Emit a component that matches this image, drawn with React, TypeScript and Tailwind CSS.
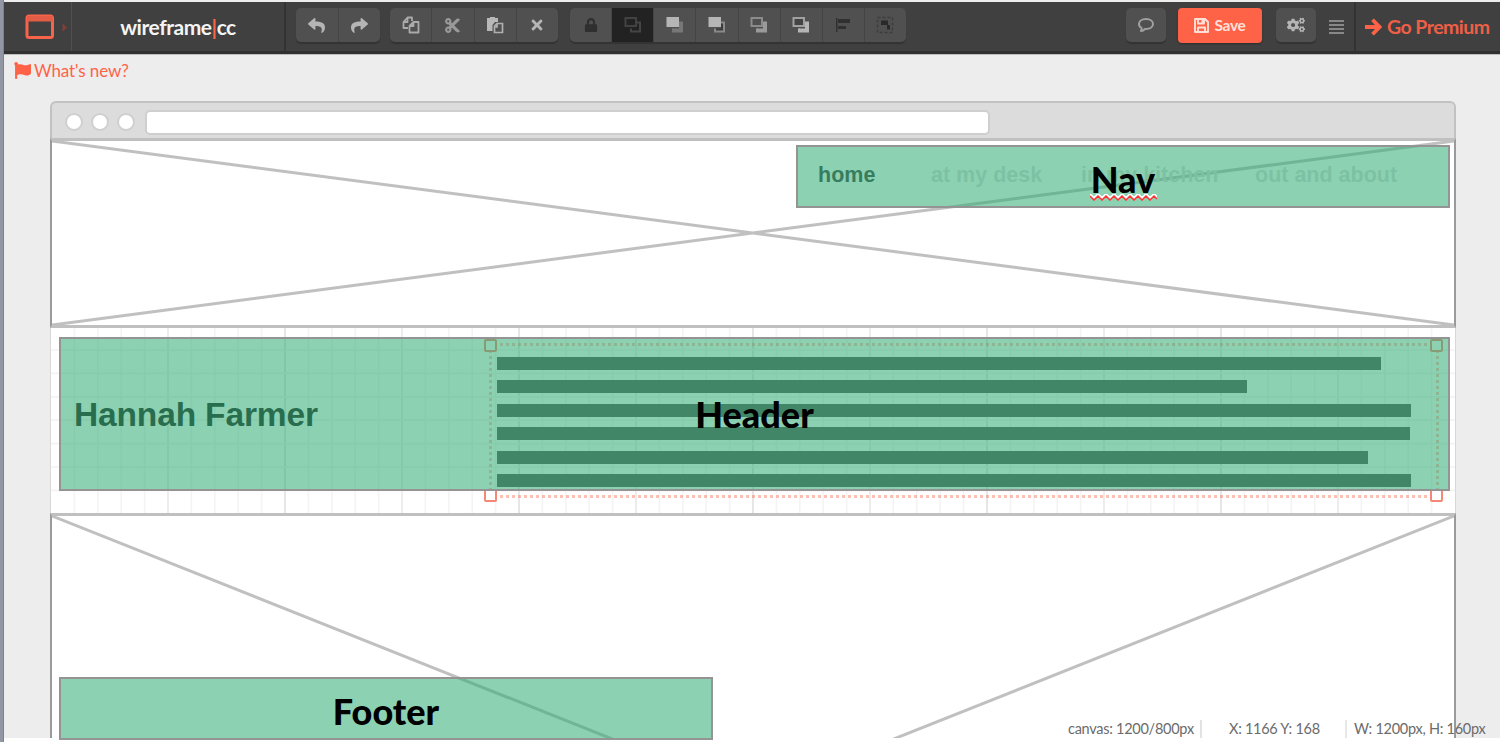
import type { ReactNode } from "react";
import { FaReply, FaShare, FaCut, FaPaste, FaTimes, FaLock, FaCogs, FaFlag } from "react-icons/fa";

function Btn({ children, active = false, first = false }: { children: ReactNode; active?: boolean; first?: boolean }) {
  return (
    <button
      className={`flex h-full flex-1 items-center justify-center ${first ? "" : "border-l border-[#444]"} ${
        active ? "bg-[#222] text-[#4a4a4a]" : "bg-[#505050] text-[#b5b5b5]"
      }`}
    >
      {children}
    </button>
  );
}

function Group({ children, className }: { children: ReactNode; className: string }) {
  return (
    <div className={`flex h-[34px] shrink-0 overflow-hidden rounded-[5px] shadow-[0_2px_1px_#333] ${className}`}>
      {children}
    </div>
  );
}

function CopyIcon() {
  return (
    <svg width="18" height="18" viewBox="0 0 18 18" fill="none" stroke="#aaa" strokeWidth="1.8" strokeLinejoin="round">
      <path d="M6 12H1.500V6l4-4.500H10V5M5.500 2v4h-4" />
      <path d="M11 6h5.500v10.500H7.500V10l4-4v4h-4" />
    </svg>
  );
}

function CommentIcon() {
  return (
    <svg width="18" height="18" viewBox="0 0 18 18" fill="none" stroke="#a0a0a0" strokeWidth="2" strokeLinejoin="round">
      <path d="M9 3C4.500 3 2 5.300 2 8c0 1.800 1 3.200 2.700 4.100L4 15c2 0 3.200-1 4-2.100L9 13c4.500 0 7-2.300 7-5S13.500 3 9 3z" />
    </svg>
  );
}

function SaveIcon() {
  return (
    <svg width="15" height="15" viewBox="0 0 15 15" fill="none" stroke="currentColor" strokeWidth="1.900" strokeLinejoin="round">
      <path d="M1 1h10l3 3v10H1z" />
      <path d="M4 14V9.500h7V14M4 1v4.500h6V1" />
      <path d="M7.500 1.500h2.200v3.500H7.500z" fill="currentColor" stroke="none" />
    </svg>
  );
}

function ArrowIcon() {
  return (
    <svg width="17" height="18" viewBox="0 0 17 18" fill="none" stroke="#ff6347" strokeWidth="3.800" className="shrink-0">
      <path d="M0 9h14M7.500 1.800L14.500 9L7.500 16.200" />
    </svg>
  );
}

function Layers({ back, front, backFill = "none", frontFill = "none" }: { back: string; front: string; backFill?: string; frontFill?: string }) {
  return (
    <svg width="18" height="18" viewBox="0 0 18 18" strokeWidth="2">
      <path d="M13 6.500h3v9H7v-3h6z" fill={frontFill} />
      <path d="M13 6.500h3v9H7v-3" stroke={front} fill="none" />
      <rect x="1.500" y="2" width="10.500" height="8" stroke={back} fill={backFill} />
    </svg>
  );
}

function Cross({ top = 0, height, visible }: { top?: number; height: number; visible: number }) {
  return (
    <svg className="block" width="1402" height={visible} viewBox={`0 0 1402 ${visible}`}>
      <path d={`M0 ${top}L1402 ${height}M1402 ${top}L0 ${height}`} stroke="#828282" strokeOpacity="0.5" strokeWidth="3" fill="none" />
    </svg>
  );
}

function Grid() {
  const minor = Array.from({ length: 59 }, (_, i) => (i + 1) * 23.4);
  const rows = Array.from({ length: 7 }, (_, i) => 22 + i * 23.4);
  return (
    <svg className="block" width="1404" height="185" viewBox="0 0 1404 185">
      {minor.map((x, i) => (
        <path key={x} d={`M${x} 0V185`} stroke={(i + 1) % 10 === 0 ? "#e2e2e2" : (i + 1) % 5 === 0 ? "#eaeaea" : "#f4f4f4"} strokeWidth="1.700" />
      ))}
      {rows.map((y) => (
        <path key={y} d={`M0 ${y}H1404`} stroke="#f3f3f3" strokeWidth="1.700" />
      ))}
    </svg>
  );
}

const bars = ["w-[884px]", "w-[750px]", "w-[914px]", "w-[913px]", "w-[871px]", "w-[914px]"];
const handles = ["-left-[8px] -top-[7px]", "-right-[7px] -top-[7px]", "-left-[8px] -bottom-[7px]", "-right-[7px] -bottom-[7px]"];
const overlay = "border-2 border-[#949494] bg-[rgba(48,171,117,0.55)] bg-clip-padding";
const label = "font-['Lato',sans-serif] text-[36px] font-black leading-none text-black";

function Toolbar() {
  return (
    <header className="flex h-[52px] w-[1496px] shrink-0 items-start border-b-[3px] border-[#303030] bg-[#404040] font-['Lato',sans-serif]">
      <div className="flex h-full w-[68px] shrink-0 items-center border-r border-[#505050] pl-[21px]">
        <svg width="44" height="26" viewBox="0 0 44 26">
          <rect x="2" y="2" width="25.500" height="21.500" rx="2" fill="none" stroke="#f8634a" strokeWidth="3" />
          <path d="M2 2h25.500v5.500H2z" fill="#e35c46" />
          <path d="M37.500 9.500L42 13.500L37.500 17.500z" fill="#823f35" />
        </svg>
      </div>
      <div className="flex h-full w-[214px] shrink-0 items-center justify-center border-r-2 border-[#333] text-[21px] font-bold tracking-[-0.45px] text-[#f4f4f4]">
        wireframe<span className="font-bold text-[#ff6347]">|</span>cc
      </div>
      <div className="flex flex-1 items-start pl-[10px] pt-[6px]">
        <Group className="w-[84px]">
          <Btn first><FaReply size={17} /></Btn>
          <Btn><FaShare size={17} /></Btn>
        </Group>
        <Group className="ml-[10px] w-[168px]">
          <Btn first><CopyIcon /></Btn>
          <Btn><FaCut size={17} className="text-[#999]" /></Btn>
          <Btn>
            <svg width="18" height="18" viewBox="0 0 18 18">
              <path d="M1 2h3V1h5v1h3v4H9L6.500 9v6H1z" fill="#b8b8b8" />
              <path d="M11 7.500h5.500v9H8.500V10zM11 7.500V11H8.500" fill="#505050" stroke="#b0b0b0" strokeWidth="1.700" />
            </svg>
          </Btn>
          <Btn><FaTimes size={16} /></Btn>
        </Group>
        <Group className="ml-[12px] w-[336px]">
          <Btn first><FaLock size={14} className="text-[#2f2f2f]" /></Btn>
          <Btn active><Layers back="#424242" front="#454545" /></Btn>
          <Btn><Layers back="#b5b5b5" backFill="#b5b5b5" front="#777" frontFill="#777" /></Btn>
          <Btn><Layers back="#b5b5b5" backFill="#b5b5b5" front="#898989" frontFill="#3c3c3c" /></Btn>
          <Btn><Layers back="#8b8b8b" front="#999" frontFill="#999" /></Btn>
          <Btn><Layers back="#a0a0a0" backFill="#444" front="#b5b5b5" frontFill="#b5b5b5" /></Btn>
          <Btn>
            <svg width="16" height="16" viewBox="0 0 16 16" fill="#303030"><path d="M1 1h1.500v14H1zM3 2h12v4H3zM3 9h8v3H3z" /></svg>
          </Btn>
          <Btn>
            <svg width="18" height="18" viewBox="0 0 18 18">
              <rect x="1.500" y="1.500" width="15" height="15" fill="none" stroke="#3c3c3c" strokeWidth="1.400" strokeDasharray="3 2" />
              <path d="M5 4.500h7v4.500H5zM11 9h3v4.500h-3z" fill="#292929" />
            </svg>
          </Btn>
        </Group>
        <Group className="ml-[220px] w-[40px]">
          <Btn first><CommentIcon /></Btn>
        </Group>
        <button className="ml-[12px] flex h-[35px] w-[84px] shrink-0 items-center justify-center gap-[5px] rounded-[4px] bg-[#ff6347] text-[15.500px] font-bold tracking-[-0.3px] text-[#ffe0d9] shadow-[0_1px_2px_#2b2b2b]">
          <SaveIcon />Save
        </button>
        <Group className="ml-[14px] w-[40px]">
          <Btn first><FaCogs size={18} /></Btn>
        </Group>
        <div className="ml-[13px] mt-[12px] flex w-[15px] flex-col gap-[2px]">
          <i className="h-[2px] bg-[#888]" /><i className="h-[2px] bg-[#888]" />
          <i className="h-[2px] bg-[#888]" /><i className="h-[2px] bg-[#888]" />
        </div>
      </div>
      <div className="flex h-full w-[146px] shrink-0 items-center gap-[5px] border-l-2 border-[#333] pl-[9px] text-[19.500px] font-bold tracking-[-0.55px] text-[#ee5f47]">
        <ArrowIcon />
        <span className="whitespace-nowrap">Go Premium</span>
      </div>
    </header>
  );
}

export default function App() {
  return (
    <div className="relative flex h-[742px] w-[1502px] overflow-hidden bg-white">
      <div className="w-1 shrink-0 border-r border-[#7c818b] bg-[#9297a3]" />
      <div className="flex h-[738px] w-[1496px] flex-col overflow-hidden bg-[#ededed]">
        <div className="h-[2px] shrink-0" />
        <Toolbar />
        <div className="h-px shrink-0 bg-[#bdbdbd]" />
        <div className="flex h-[46px] shrink-0 items-start gap-[3px] pl-[10px] pt-[6px] font-['Lato',sans-serif] text-[17px] leading-[20px] tracking-[-0.1px] text-[#ff6347]">
          <FaFlag size={17} className="mt-px" />What's new?
        </div>

        <main className="ml-[46px] flex w-[1406px] shrink-0 flex-col">
          <div className="flex h-[37px] items-center gap-[8px] rounded-t-[6px] border-2 border-b-0 border-[#c2c2c2] bg-[#dcdcdc] pl-[13px] pt-[3px]">
            <i className="size-[18px] rounded-full border-2 border-[#cfcfcf] bg-white" />
            <i className="size-[18px] rounded-full border-2 border-[#cfcfcf] bg-white" />
            <i className="size-[18px] rounded-full border-2 border-[#cfcfcf] bg-white" />
            <i className="ml-[2px] h-[25px] w-[845px] rounded-[5px] border-2 border-[#cfcfcf] bg-white" />
          </div>

          <section className="relative h-[190px] border-x-2 border-b-[3px] border-t-[3px] border-[#9a9a9a] border-y-[#c0c0c0] bg-white">
            <Cross height={184} visible={184} />
            <nav className="absolute left-[766px] top-[21px] flex whitespace-nowrap font-['Liberation_Sans',sans-serif] text-[21.500px] font-bold leading-[26px] text-[#dcdcdc]">
              <span className="w-[113px] text-[#444]">home</span>
              <span className="w-[150px]">at my desk</span>
              <span className="w-[174px]">in my kitchen</span>
              <span>out and about</span>
            </nav>
          </section>

          <section className="relative h-[185px] border-x border-[#d8d8d8] bg-white">
            <Grid />
            <h1 className="absolute left-[23px] top-[66px] whitespace-nowrap font-['Liberation_Sans',sans-serif] text-[33.500px] font-bold leading-[42px] tracking-[-0.15px] text-[#222]">
              Hannah Farmer
            </h1>
            <div className="absolute left-[438px] top-[15px] h-[155px] w-[950px] border-[3px] border-dotted border-[#ff6347]/40">
              {handles.map((h) => (
                <i key={h} className={`absolute size-[13px] rounded-[2px] border-2 border-[#f58776] bg-white ${h}`} />
              ))}
              <div className="flex flex-col gap-[10.400px] pl-[5px] pt-[11px]">
                {bars.map((w, i) => <i key={i} className={`h-[13px] bg-[#595959] ${w}`} />)}
              </div>
            </div>
          </section>

          <section className="h-[226px] border-x-2 border-t-[3px] border-[#9a9a9a] border-t-[#c0c0c0] bg-white">
            <Cross height={558} visible={223} />
          </section>
        </main>
      </div>

      <div className={`absolute left-[796px] top-[145px] flex h-[63px] w-[654px] justify-center pt-[14px] ${overlay}`}>
        <div className={`relative h-[40px] ${label}`}>
          Nav
          <svg className="absolute -left-px top-[33px]" width="67" height="7" viewBox="0 0 67 7" fill="none">
            <path d="M0 0L4 4L8 0L12 4L16 0L20 4L24 0L28 4L32 0L36 4L40 0L44 4L48 0L52 4L56 0L60 4L64 0L67 3" stroke="white" strokeWidth="2" />
            <path d="M0 2L4 6L8 2L12 6L16 2L20 6L24 2L28 6L32 2L36 6L40 2L44 6L48 2L52 6L56 2L60 6L64 2L67 5" stroke="#f33" strokeWidth="1.500" />
          </svg>
        </div>
      </div>
      <div className={`absolute left-[59px] top-[337px] flex h-[154px] w-[1391px] items-center justify-center ${overlay}`}>
        <span className={label}>Header</span>
      </div>
      <div className={`absolute left-[59px] top-[677px] flex h-[63px] w-[654px] items-center justify-center ${overlay}`}>
        <span className={`pt-[4px] ${label}`}>Footer</span>
      </div>

      <footer className="absolute left-[1068px] top-[720px] flex h-[18px] whitespace-nowrap font-['Lato',sans-serif] text-[14.500px] leading-[18px] tracking-[-0.27px] text-[#6b6b6b]">
        <span className="w-[134px] border-r-2 border-[#e2e2e2]">canvas: 1200/800px</span>
        <span className="w-[145px] border-r-2 border-[#e8e8e8] pl-[27px]">X: 1166 Y: 168</span>
        <span className="pl-[7px]">W: 1200px, H: 160px</span>
      </footer>
    </div>
  );
}
